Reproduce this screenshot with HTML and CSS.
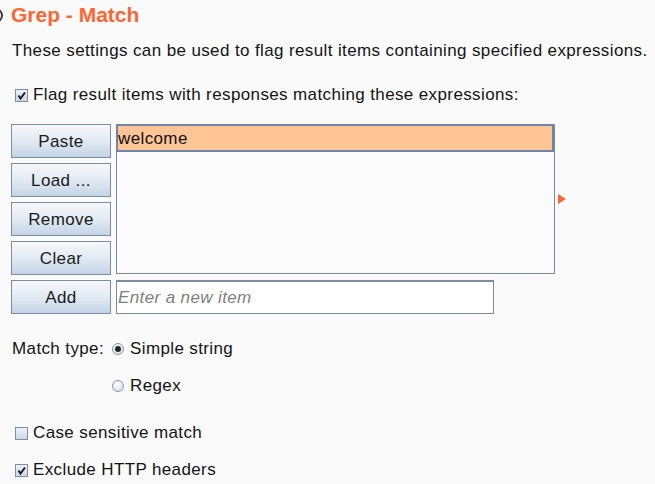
FILE: index.html
```html
<!DOCTYPE html>
<html>
<head>
<meta charset="utf-8">
<link rel="stylesheet" href="styles.css">
</head>
<body>
<div class="page">
  <div class="title-row">
    <span class="help-icon"></span>
    <h1 class="title">Grep - Match</h1>
  </div>
  <p class="desc">These settings can be used to flag result items containing specified expressions.</p>
  <label class="check-row flag-row">
    <span class="checkbox checked"><svg width="11" height="11" viewBox="0 0 11 11"><path d="M2.5 5.5 L4.5 8.5 L9 2.5" fill="none" stroke="#1e1e1e" stroke-width="2"/></svg></span>
    <span>Flag result items with responses matching these expressions:</span>
  </label>

  <div class="editor">
    <button class="btn b1">Paste</button>
    <button class="btn b2">Load ...</button>
    <button class="btn b3">Remove</button>
    <button class="btn b4">Clear</button>
    <button class="btn b5">Add</button>
    <div class="list">
      <div class="item selected">welcome</div>
    </div>
    <span class="arrow"></span>
    <div class="input-wrap"><input class="new-item" type="text" placeholder="Enter a new item"></div>
  </div>

  <div class="match-type">
    <span class="mt-label">Match type:</span>
    <div class="mt-options">
      <label class="radio-row"><span class="radio on"></span><span>Simple string</span></label>
      <label class="radio-row regex"><span class="radio"></span><span>Regex</span></label>
    </div>
  </div>

  <label class="check-row case-row">
    <span class="checkbox"></span>
    <span>Case sensitive match</span>
  </label>
  <label class="check-row exclude-row">
    <span class="checkbox checked"><svg width="11" height="11" viewBox="0 0 11 11"><path d="M2.5 5.5 L4.5 8.5 L9 2.5" fill="none" stroke="#1e1e1e" stroke-width="2"/></svg></span>
    <span>Exclude HTTP headers</span>
  </label>
</div>
</body>
</html>
```

FILE: styles.css
```css
html, body {
  margin: 0;
  padding: 0;
  background: #fafafa;
}
body {
  font-family: "Liberation Sans", Arial, sans-serif;
  font-size: 17px;
  letter-spacing: 0.38px;
  color: #141414;
  overflow: hidden;
  width: 655px;
  height: 484px;
}
.page {
  padding-top: 3px;
}
.title-row {
  display: flex;
  align-items: center;
  height: 24px;
  margin-left: -12px;
  gap: 8px;
}
.help-icon {
  width: 11px;
  height: 11px;
  border: 2px solid #3c3c3c;
  border-radius: 50%;
  flex: none;
  margin-top: 1px;
}
.title {
  margin: 0;
  font-size: 21px;
  letter-spacing: 0;
  line-height: 24px;
  font-weight: bold;
  color: #ff6633;
}
.desc {
  margin: 15px 0 0 12px;
  line-height: 18px;
  white-space: nowrap;
}
.check-row {
  display: flex;
  align-items: center;
  height: 18px;
  line-height: 18px;
  padding-left: 15px;
  gap: 5px;
}
.flag-row {
  margin-top: 26px;
}
.checkbox {
  width: 11px;
  height: 11px;
  border: 1px solid #7c8da4;
  background: linear-gradient(#eef2f8, #ccd8e8);
  display: flex;
  align-items: center;
  justify-content: center;
  flex: none;
}
.checkbox svg {
  display: block;
}
.editor {
  margin: 20px 0 0 11px;
  display: grid;
  grid-template-columns: 100px 439px 10px;
  grid-template-rows: repeat(5, 34px);
  column-gap: 5px;
  row-gap: 5px;
}
.btn {
  font-family: "Liberation Sans", Arial, sans-serif;
  font-size: 17px;
  letter-spacing: 0.38px;
  color: #1a1a1a;
  border: 1px solid #7d8ca1;
  background: linear-gradient(#f6f8fb 0%, #e2eaf3 50%, #c3d4e7 100%);
  padding: 2px 0 0 0;
  margin: 0;
  grid-column: 1;
}
.b1 { grid-row: 1; }
.b2 { grid-row: 2; }
.b3 { grid-row: 3; }
.b4 { grid-row: 4; }
.b5 { grid-row: 5; }
.list {
  grid-column: 2;
  grid-row: 1 / span 4;
  border: 1px solid #7c8a9e;
  background: #fbfbfb;
  box-sizing: border-box;
  height: 150px;
}
.item {
  line-height: 24px;
  height: 24px;
  white-space: nowrap;
}
.item.selected {
  background: #ffc597;
  border: 2px solid #7085a8;
  margin: -1px 0 0 -1px;
  padding-top: 1px;
  height: 23px;
  line-height: 23px;
  color: #111;
}
.arrow {
  grid-column: 3;
  grid-row: 1 / span 4;
  align-self: center;
  margin-left: -2px;
  margin-top: -1px;
  width: 0;
  height: 0;
  border-left: 8px solid #ff6633;
  border-top: 5px solid transparent;
  border-bottom: 5px solid transparent;
}
.input-wrap {
  grid-column: 2;
  grid-row: 5;
}
.new-item {
  box-sizing: border-box;
  width: 378px;
  height: 34px;
  margin: 0;
  border: 1px solid #7d8b9e;
  border-top-width: 2px;
  background: #fff;
  font-family: "Liberation Sans", Arial, sans-serif;
  font-size: 17px;
  letter-spacing: 0.38px;
  padding: 1px 0 0 1px;
  outline: none;
}
.new-item::placeholder {
  color: #808080;
  font-style: italic;
}
.match-type {
  margin: 26px 0 0 12px;
  display: flex;
}
.mt-label {
  width: 100px;
  line-height: 18px;
  height: 18px;
}
.mt-options {
  display: flex;
  flex-direction: column;
  gap: 19px;
}
.radio-row {
  display: flex;
  align-items: center;
  height: 18px;
  line-height: 18px;
  gap: 6px;
}
.radio {
  width: 10px;
  height: 10px;
  border: 1px solid #8796a8;
  border-radius: 50%;
  background: radial-gradient(circle at 40% 35%, #ffffff, #cfd9e6);
  display: flex;
  align-items: center;
  justify-content: center;
  flex: none;
}
.radio.on::after {
  content: "";
  width: 6px;
  height: 6px;
  border-radius: 50%;
  background: #262626;
}
.case-row {
  margin-top: 29px;
}
.exclude-row {
  margin-top: 19px;
}
```
